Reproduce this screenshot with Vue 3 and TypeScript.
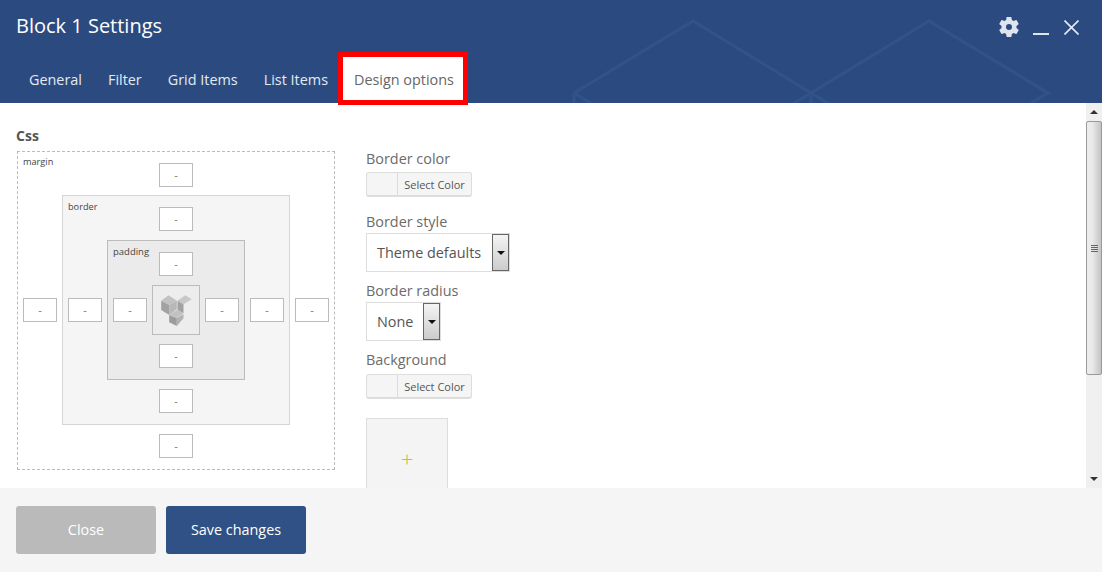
<script setup lang="ts">
const tabs = ['General', 'Filter', 'Grid Items', 'List Items']
</script>

<template>
  <div class="modal">
    <header class="head">
      <svg class="pattern" width="1102" height="103" viewBox="0 0 1102 103" fill="none" stroke="#325389" stroke-width="3">
        <path d="M574 93 693 21 811 93 929 21 1048 93 1000 122M574 93 640 133M574 93V110M811 93 760 124M811 93 860 122M811 93V110" />
      </svg>
      <div class="title-row">
        <h1 class="title">Block 1 Settings</h1>
        <div class="controls">
          <svg class="gear" width="24" height="24" viewBox="0 0 24 24" fill="#dfe4ef">
            <path fill-rule="evenodd" d="M19.43 12.98c.04-.32.07-.64.07-.98s-.03-.66-.07-.98l2.11-1.65c.19-.15.24-.42.12-.64l-2-3.46c-.12-.22-.39-.3-.61-.22l-2.49 1c-.52-.4-1.08-.73-1.69-.98l-.38-2.65A.49.49 0 0 0 14 2h-4c-.25 0-.46.18-.49.42l-.38 2.65c-.61.25-1.17.59-1.69.98l-2.49-1c-.23-.09-.49 0-.61.22l-2 3.46c-.13.22-.07.49.12.64l2.11 1.65c-.04.32-.07.65-.07.98s.03.66.07.98l-2.11 1.65c-.19.15-.24.42-.12.64l2 3.46c.12.22.39.3.61.22l2.49-1c.52.4 1.08.73 1.69.98l.38 2.65c.03.24.24.42.49.42h4c.25 0 .46-.18.49-.42l.38-2.65c.61-.25 1.17-.59 1.69-.98l2.49 1c.23.09.49 0 .61-.22l2-3.46c.12-.22.07-.49-.12-.64l-2.11-1.65zM12 15a3 3 0 1 1 0-6 3 3 0 0 1 0 6z" />
          </svg>
          <span class="minimize"></span>
          <svg class="close" width="15" height="15" viewBox="0 0 15 15" stroke="#e6eaf2" stroke-width="1.6" fill="none">
            <path d="M.5.5 14.5 14.5M14.5.5.5 14.5" />
          </svg>
        </div>
      </div>
      <nav class="tabs">
        <a v-for="t in tabs" :key="t" class="tab">{{ t }}</a>
        <a class="tab active">Design options</a>
      </nav>
    </header>

    <main class="body">
      <div class="scroll">
        <div class="css-title">Css</div>
        <div class="columns">
          <div class="box margin">
            <span class="tag">margin</span>
            <div class="in top">-</div>
            <div class="in left">-</div>
            <div class="box border">
              <span class="tag">border</span>
              <div class="in top">-</div>
              <div class="in left">-</div>
              <div class="box padding">
                <span class="tag">padding</span>
                <div class="in top">-</div>
                <div class="in left">-</div>
                <div class="logo">
                  <svg width="31" height="31" viewBox="183 180 92 93">
                    <path fill="#c2c2c2" d="M183 197 205 181 230 197 207 210z" />
                    <path fill="#a2a2a2" d="M183 197 207 210V240L183 225z" />
                    <path fill="#b8b8b8" d="M207 210 230 197V222L207 240z" />
                    <path fill="#c8c8c8" d="M232 197 255 181 275 193 250 208z" />
                    <path fill="#a2a2a2" d="M232 197 250 208V235L232 225z" />
                    <path fill="#c2c2c2" d="M207 240 230 224 250 235 230 250z" />
                    <path fill="#9c9c9c" d="M207 240 230 250V273L207 262z" />
                    <path fill="#b2b2b2" d="M230 250 250 237V250L230 273z" />
                  </svg>
                </div>
                <div class="in right">-</div>
                <div class="in bottom">-</div>
              </div>
              <div class="in right">-</div>
              <div class="in bottom">-</div>
            </div>
            <div class="in right">-</div>
            <div class="in bottom">-</div>
          </div>

          <div class="fields">
            <label class="lbl first">Border color</label>
            <button class="color-btn"><span class="swatch"></span><span class="sel">Select Color</span></button>
            <label class="lbl l2">Border style</label>
            <div class="select wide"><span>Theme defaults</span><span class="arrow"></span></div>
            <label class="lbl l3">Border radius</label>
            <div class="select narrow"><span>None</span><span class="arrow"></span></div>
            <label class="lbl l4">Background</label>
            <button class="color-btn"><span class="swatch"></span><span class="sel">Select Color</span></button>
            <div class="upload">+</div>
          </div>
        </div>
      </div>
      <div class="scrollbar">
        <div class="sb-btn"><i class="up"></i></div>
        <div class="thumb"><i></i><i></i><i></i><i></i></div>
        <div class="track"></div>
        <div class="sb-btn"><i class="down"></i></div>
      </div>
    </main>

    <footer class="foot">
      <button class="btn gray">Close</button>
      <button class="btn blue">Save changes</button>
    </footer>
  </div>
</template>

<style>
html, body { margin: 0; background: #fff; }
</style>

<style scoped>
.modal { width: 1102px; height: 572px; display: flex; flex-direction: column; font-family: "Open Sans", sans-serif; overflow: hidden; }
.head { position: relative; height: 103px; background: #2b4b80; flex: none; box-sizing: border-box; padding: 0 16px; }
.pattern { position: absolute; left: 0; top: 0; }
.title-row { position: relative; display: flex; justify-content: space-between; align-items: center; height: 54px; }
.title { margin: 0 0 2px; font-size: 20px; font-weight: 400; color: #fff; line-height: 52px; }
.controls { display: flex; align-items: center; gap: 12px; padding-right: 7px; }
.gear { display: block; }
.minimize { display: block; width: 16px; height: 2px; background: #dfe4ef; margin: 14px 3px 0 0; }
.close { display: block; }
.tabs { position: relative; display: flex; align-items: flex-start; }
.tab { font-size: 14.4px; line-height: 19px; color: #e4e9f2; padding: 16px 13px 0; }
.active { background: #fff; color: #666; border: 5px solid #f00; width: 130px; height: 53px; box-sizing: border-box; margin: -2px 0 0 -3px; padding: 13px 0 0 11px; position: relative; white-space: nowrap; }
.body { flex: 1; min-height: 0; display: flex; overflow: hidden; background: #fff; }
.scroll { flex: 1; min-width: 0; padding: 23px 0 0 16px; }
.css-title { font-size: 14px; font-weight: 700; color: #555; line-height: 19px; }
.columns { display: flex; margin-top: 6px; margin-left: 1px; }
.box { position: relative; box-sizing: border-box; display: grid; justify-items: center; align-items: center; }
.margin { width: 318px; height: 319px; border: 1px dashed #bbb; flex: none; grid-template-columns: 44px 228px 44px; grid-template-rows: 43px 230px 44px; }
.border { width: 228px; height: 230px; border: 1px solid #d5d5d5; background: #f5f5f5; grid-template-columns: 44px 138px 44px; grid-template-rows: 44px 140px 44px; }
.padding { width: 138px; height: 140px; border: 1px solid #bbb; background: #ebebeb; grid-template-columns: 44px 48px 44px; grid-template-rows: 44px 50px 44px; }
.box > .border, .box > .padding, .logo { grid-column: 2; grid-row: 2; }
.tag { position: absolute; left: 5px; top: 4px; font-size: 9.2px; line-height: 12px; color: #444; }
.border > .tag { top: 5px; }
.padding > .tag { top: 5px; font-size: 9.5px; }
.in { width: 34px; height: 24px; box-sizing: border-box; border: 1px solid #bbb; background: #fff; font-size: 11px; line-height: 22px; text-align: center; color: #777; }
.top { grid-column: 2; grid-row: 1; margin-top: 2px; }
.bottom { grid-column: 2; grid-row: 3; margin-top: -2px; }
.left { grid-column: 1; grid-row: 2; }
.right { grid-column: 3; grid-row: 2; }
.logo { width: 48px; height: 50px; box-sizing: border-box; border: 1px solid #bbb; background: #ededed; display: flex; align-items: center; justify-content: center; }
.fields { margin-left: 31px; margin-top: -2px; display: flex; flex-direction: column; align-items: flex-start; }
.lbl { font-size: 14.4px; line-height: 19px; color: #6b6b6b; }
.first { margin-bottom: 4px; }
.l2 { margin-top: 15px; margin-bottom: 2px; }
.l3 { margin-top: 9px; margin-bottom: 2px; }
.l4 { margin-top: 9px; margin-bottom: 5px; }
.color-btn { display: flex; width: 106px; height: 25px; padding: 0; box-sizing: border-box; border: 1px solid #ddd; border-bottom-width: 2px; border-radius: 3px; background: #f5f5f5; font-family: inherit; }
.swatch { width: 31px; height: 100%; box-sizing: border-box; border-right: 1px solid #ddd; flex: none; }
.sel { flex: 1; font-size: 11px; line-height: 23px; color: #555; text-align: center; }
.select { display: flex; justify-content: space-between; align-items: stretch; box-sizing: border-box; height: 39px; border: 1px solid #ddd; font-size: 14.4px; line-height: 37px; color: #555; padding-left: 10px; background: #fff; }
.wide { width: 144px; }
.narrow { width: 75px; }
.arrow { position: relative; width: 17px; box-sizing: border-box; border: 1px solid #666; background: linear-gradient(#f4f4f4, #ccc); }
.arrow::after { content: ""; position: absolute; left: 4px; top: 16px; border: 4px solid transparent; border-top: 4px solid #111; border-bottom: 0; }
.upload { margin-top: 19px; width: 82px; height: 90px; box-sizing: border-box; flex: none; border: 1px solid #ddd; background: #f4f4f4; color: #a9c93e; font-size: 22px; line-height: 78px; text-align: center; font-weight: 300; }
.scrollbar { width: 16px; flex: none; display: flex; flex-direction: column; background: #f0f0f0; }
.sb-btn { height: 18px; flex: none; position: relative; }
.sb-btn i { position: absolute; left: 4px; top: 7px; border: 4px solid transparent; }
.up { border-top: 0 !important; border-bottom-color: #333 !important; }
.down { border-bottom: 0 !important; border-top-color: #333 !important; }
.thumb { height: 254px; flex: none; box-sizing: border-box; border: 1px solid #999; border-radius: 2px; background: linear-gradient(90deg, #eee, #e8e8e8 40%, #c4c4c4); display: flex; flex-direction: column; justify-content: center; align-items: center; gap: 1px; }
.thumb i { display: block; width: 7px; height: 1px; background: #666; }
.track { flex: 1; }
.foot { height: 84px; flex: none; box-sizing: border-box; background: #f5f5f5; padding: 18px 16px; display: flex; gap: 10px; }
.btn { width: 140px; height: 48px; border: 0; border-radius: 3px; font-family: inherit; font-size: 14.4px; color: #fff; padding: 0 0 2px; }
.gray { background: #bababa; }
.blue { background: #2f5185; }
</style>
